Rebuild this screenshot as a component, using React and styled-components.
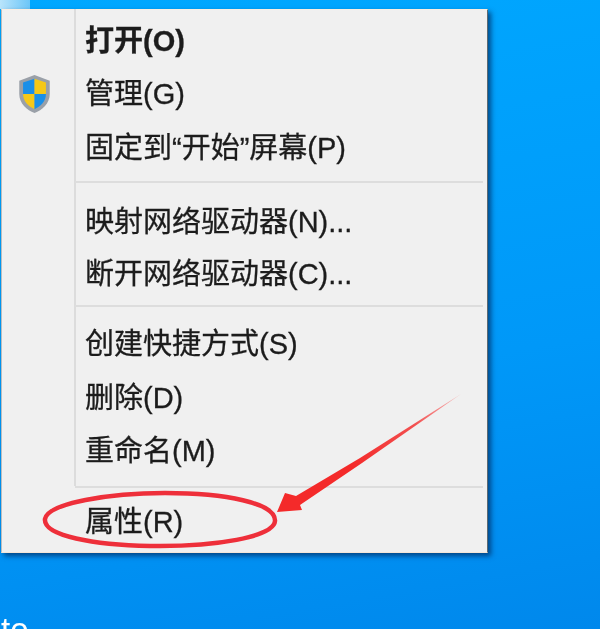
import React from 'react';
import styled, { createGlobalStyle } from 'styled-components';

const GlobalStyle = createGlobalStyle`
  html, body {
    margin: 0;
    padding: 0;
  }
`;

const Desktop = styled.div`
  position: relative;
  width: 600px;
  height: 629px;
  overflow: hidden;
  background: linear-gradient(170deg, #00a8ff 0%, #0098f8 60%, #0088ec 100%);
  font-family: "Liberation Sans", "Noto Sans CJK SC", sans-serif;
`;

const SelectedIcon = styled.div`
  width: 30px;
  height: 9px;
  background: linear-gradient(to right, #b9e4fb, #6cc6f8);
`;

const Menu = styled.div`
  width: 487px;
  height: 544px;
  margin-left: 1px;
  box-sizing: border-box;
  padding-top: 4px;
  background: #f0f0f0;
  border-top: 1px solid #fbeee2;
  border-bottom: 1px solid #f5e6d8;
  border-left: 1px solid #bdbdbd;
  border-right: 1px solid #5d6a72;
  box-shadow: 3px 3px 5px rgba(0, 45, 100, 0.75);
`;

const Section = styled.div`
  background: linear-gradient(to right, transparent 72px, #dcdcdc 72px, #dcdcdc 74px, transparent 74px);
  margin-top: -5px;
  padding-top: 5px;
  padding-bottom: 8px;
`;

const Row = styled.div`
  display: flex;
  align-items: center;
  height: ${(p) => p.$height || 53.5}px;
  color: #1c1c1c;
  font-size: 29px;
  font-weight: ${(p) => (p.$bold ? 700 : 400)};
  filter: blur(0.55px);
`;

const IconSlot = styled.div`
  display: flex;
  justify-content: center;
  width: 83px;
  flex-shrink: 0;
  padding-right: 19px;
  box-sizing: border-box;
`;

const RowLabel = styled.span`
  margin-bottom: 6px;
  white-space: nowrap;
  -webkit-text-stroke: 0.3px #1c1c1c;
`;

const Separator = styled.div`
  height: 2px;
  margin: ${(p) => p.$top}px 4px ${(p) => p.$bottom}px 73px;
  background: #dddddd;
`;

const DesktopLabel = styled.div`
  margin-top: 60px;
  padding-left: 1px;
  color: #fff;
  font-size: 33px;
  line-height: 33px;
  filter: blur(0.5px);
`;

const Annotation = styled.svg`
  position: absolute;
  top: 0;
  left: 0;
  width: 600px;
  height: 629px;
  pointer-events: none;
  filter: blur(0.5px);
`;

const ShieldIcon = () => (
  <svg width="35" height="40" viewBox="0 0 36 42">
    <path d="M18 1 L34 7 V21 C34 31 26 38 18 41 C10 38 2 31 2 21 V7 Z" fill="#9aa0a8" />
    <path d="M18 5 V21 H6 V9 Z" fill="#1a8fe8" />
    <path d="M18 5 L30 9 V21 H18 Z" fill="#f5c818" />
    <path d="M6 21 H18 V37 C12 34 6 29 6 21 Z" fill="#f5c818" />
    <path d="M18 21 H30 C30 29 24 34 18 37 Z" fill="#1a8fe8" />
  </svg>
);

const MenuRow = ({ label, bold, icon, height }) => (
  <Row $bold={bold} $height={height}>
    <IconSlot>{icon}</IconSlot>
    <RowLabel>{label}</RowLabel>
  </Row>
);

export default function App() {
  return (
    <Desktop>
      <GlobalStyle />
      <SelectedIcon />
      <Menu>
        <Section>
          <MenuRow label="打开(O)" bold />
          <MenuRow label="管理(G)" icon={<ShieldIcon />} />
          <MenuRow label="固定到“开始”屏幕(P)" />
          <Separator $top={6} $bottom={13} />
          <MenuRow label="映射网络驱动器(N)..." height={52.5} />
          <MenuRow label="断开网络驱动器(C)..." height={52.5} />
          <Separator $top={4} $bottom={11} />
          <MenuRow label="创建快捷方式(S)" />
          <MenuRow label="删除(D)" />
          <MenuRow label="重命名(M)" />
        </Section>
        <Separator $top={0} $bottom={7} />
        <MenuRow label="属性(R)" />
      </Menu>
      <DesktopLabel>to</DesktopLabel>
      <Annotation viewBox="0 0 600 629">
        <defs>
          <linearGradient id="arrowFade" x1="460" y1="395" x2="277" y2="512" gradientUnits="userSpaceOnUse">
            <stop offset="0" stopColor="#f6b8b8" />
            <stop offset="0.25" stopColor="#f25050" />
            <stop offset="0.6" stopColor="#f42a2a" />
            <stop offset="1" stopColor="#f42a2a" />
          </linearGradient>
        </defs>
        <path
          d="M45 519 C48 503 110 493 165 493 C225 493 276 503 275 521 C274 537 215 547 150 546 C95 545 43 536 45 519 Z"
          fill="none"
          stroke="#ee2f3a"
          strokeWidth="4.5"
        />
        <path
          d="M461 394 L360 458 L296 496 L285 493 L277 512 L302 510 L300 505 L362 463 Z"
          fill="url(#arrowFade)"
        />
      </Annotation>
    </Desktop>
  );
}
